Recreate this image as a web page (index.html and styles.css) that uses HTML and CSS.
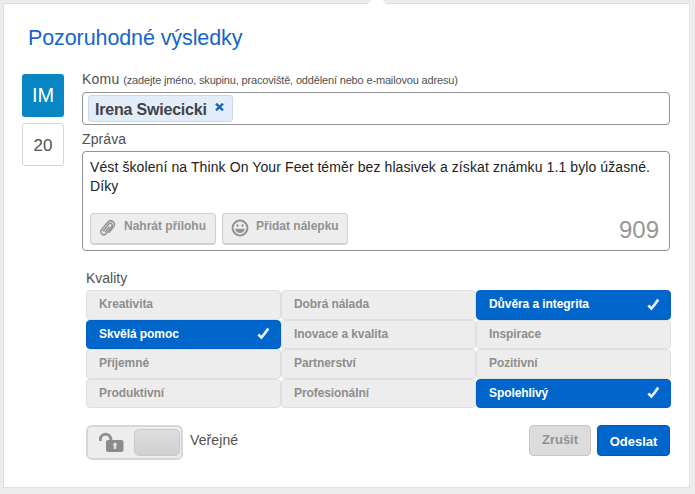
FILE: index.html
```html
<!DOCTYPE html>
<html lang="cs">

<head>
  <meta charset="UTF-8" />
  <meta name="viewport" content="width=device-width, initial-scale=1.0" />
  <title>Pozoruhodné výsledky</title>
  <link rel="stylesheet" href="styles.css">
</head>

<body>
  <div class="card">
    <span class="card-arrow"></span>
    <h1>Pozoruhodné výsledky</h1>

    <form class="columns" onsubmit="event.preventDefault();">
      <div class="side">
        <div class="avatar">IM</div>
        <div class="points">20</div>
      </div>

      <div class="main">
        <div class="label label-to"><span class="label-text">Komu</span> <small>(zadejte jméno, skupinu, pracoviště, oddělení nebo e-mailovou adresu)</small></div>
        <div class="recipients">
          <div class="tag">
            <span class="tag-name">Irena Swiecicki</span>
            <svg class="tag-remove" width="9" height="8" viewBox="0 0 9 8"><path d="M1 .7 8 7.3M8 .7 1 7.3" /></svg>
          </div>
        </div>

        <div class="label label-message">Zpráva</div>
        <div class="message">
          <p>Vést školení na Think On Your Feet téměr bez hlasivek a získat známku 1.1 bylo úžasné.<br>Díky</p>
          <div class="message-tools">
            <button type="button" class="tool-btn">
              <svg class="clip" width="18" height="18" viewBox="0 0 18 18"><path d="M4 12.2 9.7 5a2 2 0 0 1 3.1 2.6l-5.6 7a3 3 0 0 1-4.7-3.8l6.4-7.8a3.7 3.7 0 0 1 5.7 4.7l-4.9 6.2M10.3 7.7l-4.4 5.5" /></svg>
              <span>Nahrát přílohu</span>
            </button>
            <button type="button" class="tool-btn">
              <svg width="18" height="18" viewBox="0 0 18 18">
                <circle cx="9" cy="9" r="7.4" fill="none" stroke="#939393" stroke-width="2" />
                <ellipse cx="6.5" cy="6.5" rx="1" ry="1.6" fill="#939393" />
                <ellipse cx="11.5" cy="6.5" rx="1" ry="1.6" fill="#939393" />
                <path d="M4.2 9.7h9.6a4.8 4.2 0 0 1-9.6 0z" fill="#939393" />
              </svg>
              <span>Přidat nálepku</span>
            </button>
            <span class="counter">909</span>
          </div>
        </div>

        <div class="label label-qualities">Kvality</div>
        <div class="qualities">
          <div class="quality"><span>Kreativita</span></div>
          <div class="quality"><span>Dobrá nálada</span></div>
          <div class="quality selected"><span>Důvěra a integrita</span><svg width="13" height="13" viewBox="0 0 13 13"><path d="M1.3 7.5 4.5 10.5Q7.5 7 11.3 1.5" /></svg></div>
          <div class="quality selected"><span>Skvělá pomoc</span><svg width="13" height="13" viewBox="0 0 13 13"><path d="M1.3 7.5 4.5 10.5Q7.5 7 11.3 1.5" /></svg></div>
          <div class="quality"><span>Inovace a kvalita</span></div>
          <div class="quality"><span>Inspirace</span></div>
          <div class="quality"><span>Příjemné</span></div>
          <div class="quality"><span>Partnerství</span></div>
          <div class="quality"><span>Pozitivní</span></div>
          <div class="quality"><span>Produktivní</span></div>
          <div class="quality"><span>Profesionální</span></div>
          <div class="quality selected"><span>Spolehlivý</span><svg width="13" height="13" viewBox="0 0 13 13"><path d="M1.3 7.5 4.5 10.5Q7.5 7 11.3 1.5" /></svg></div>
        </div>

        <div class="footer">
          <div class="toggle">
            <svg width="25" height="20" viewBox="0 0 25 20">
              <path d="M1.3 9V7.5a5.3 5.3 0 0 1 10.6 0V9" fill="none" stroke="#929292" stroke-width="3" />
              <rect x="7" y="8" width="17.5" height="12" rx="2" fill="#8b8b8b" />
              <path d="M16 10.5a2 2 0 0 1 1.2 3.5v3h-2.4v-3a2 2 0 0 1 1.2-3.5z" fill="#e0e0e0" />
            </svg>
            <span class="toggle-knob"></span>
          </div>
          <span class="toggle-label">Veřejné</span>
          <button type="button" class="btn cancel-btn">Zrušit</button>
          <button type="submit" class="btn submit-btn">Odeslat</button>
        </div>
      </div>
    </form>
  </div>
</body>

</html>
```
FILE: styles.css
```css
* {
  box-sizing: border-box;
}

body {
  font-family: "Liberation Sans", Arial, sans-serif;
  margin: 0;
  padding: 3px 5px 6px 3px;
  height: 494px;
  background-color: #ececec;
  color: #505050;
  overflow: hidden;
}

button {
  font-family: inherit;
  cursor: pointer;
}

.card {
  position: relative;
  height: 485px;
  background-color: #fff;
  border: 1px solid #dfdfdf;
  box-shadow: 1px 0 0 #f3f3f3;
  padding: 18px 19px 0 18px;
}

/* tip of the popover pointing up */
.card-arrow {
  position: absolute;
  top: -6px;
  left: 365px;
  width: 16px;
  height: 16px;
  border-radius: 3px;
  background-color: #fff;
  transform: rotate(45deg);
}

h1 {
  margin: 0 0 0 6px;
  font-size: 21.5px;
  font-weight: normal;
  letter-spacing: -0.1px;
  line-height: 32px;
  color: #1467c8;
}

.columns {
  display: flex;
  gap: 18px;
  margin-top: 16px;
}

.side {
  display: flex;
  flex-direction: column;
  gap: 6px;
  width: 42px;
  padding-top: 4px;
}

.avatar,
.points {
  height: 43px;
  border-radius: 3px;
  text-align: center;
}

.avatar {
  background-color: #0786c4;
  color: #fff;
  font-size: 20px;
  line-height: 43px;
}

.points {
  border: 1px solid #d6d6d6;
  font-size: 17px;
  line-height: 43px;
}

.main {
  width: 588px;
}

.label {
  font-size: 14px;
  line-height: 18px;
  white-space: nowrap;
}

.label-to {
  height: 22px;
}

.label-text {
  letter-spacing: 0.2px;
}

.label small {
  font-size: 11px;
  letter-spacing: -0.16px;
}

.label-message {
  height: 26px;
  padding-top: 5px;
  letter-spacing: 0.1px;
}

.label-qualities {
  height: 39px;
  padding: 18px 0 0 4px;
}

.recipients {
  height: 33px;
  border: 1px solid #929292;
  border-radius: 4px;
  padding: 2px 5px;
}

.tag {
  display: flex;
  width: 145px;
  height: 27px;
  padding: 0 6px;
  border: 1px solid #ccd7e6;
  border-radius: 3px;
  background-color: #e3ecf9;
  color: #414448;
  font-size: 16px;
  font-weight: bold;
  letter-spacing: -0.2px;
  line-height: 28px;
  white-space: nowrap;
}

.tag-remove {
  margin: 7px 0 0 7px;
  fill: none;
  stroke: #1268ba;
  stroke-width: 2.4;
}

.message {
  display: flex;
  flex-direction: column;
  justify-content: space-between;
  height: 100px;
  border: 1px solid #929292;
  border-radius: 4px;
  padding: 6px 10px 5px 7px;
}

.message p {
  margin: 0;
  color: #222;
  font-size: 14px;
  letter-spacing: 0.1px;
  line-height: 19px;
  white-space: nowrap;
}

.message-tools {
  display: flex;
  gap: 6px;
  height: 32px;
}

.tool-btn {
  display: flex;
  gap: 7px;
  width: 126px;
  height: 32px;
  padding: 5px 0 0 8px;
  border: 1px solid #cfcfcf;
  border-bottom-width: 2px;
  border-radius: 4px;
  background-color: #ededed;
  color: #929292;
  font-size: 12px;
  font-weight: bold;
  line-height: 15px;
  white-space: nowrap;
}

.clip {
  fill: none;
  stroke: #939393;
  stroke-width: 1.5;
}

.tag .tag-remove {
  margin-left: 8px;
}

.counter {
  margin-left: auto;
  color: #979797;
  font-size: 24px;
  line-height: 34px;
}

.qualities {
  display: grid;
  grid-template-columns: repeat(3, 195px);
  grid-auto-rows: 29.5px;
  margin-left: 4px;
}

.quality {
  display: flex;
  align-items: center;
  justify-content: space-between;
  padding: 0 10px 1px 12px;
  border: 1px solid #dfdfdf;
  border-radius: 4px;
  background-color: #ededed;
  color: #8e8e8e;
  font-size: 12px;
  font-weight: bold;
  letter-spacing: -0.08px;
}

.quality.selected {
  border-color: #0060c3;
  background-color: #0066cc;
  color: #fff;
}

.quality svg {
  fill: none;
  stroke: #e9f3ff;
  stroke-width: 2.6;
}

.footer {
  display: flex;
  margin: 17px 0 0 4px;
}

.toggle {
  display: flex;
  justify-content: space-between;
  width: 97px;
  height: 35px;
  padding: 3px 1px 3px 11px;
  border: 2px solid #d6d6d6;
  border-radius: 6px;
  background-color: #ededed;
}

.toggle svg {
  margin-top: 2px;
}

.toggle-knob {
  width: 46px;
  height: 27px;
  margin-top: -1px;
  border: 1px solid #c9c9c9;
  border-radius: 5px;
  background: linear-gradient(#dedede, #d0d0d0);
}

.toggle-label {
  margin-left: 7px;
  font-size: 14px;
  letter-spacing: 0.1px;
  line-height: 31px;
}

.btn {
  height: 31px;
  padding: 0;
  border-radius: 4px;
  font-weight: bold;
}

.cancel-btn {
  width: 62px;
  margin-left: auto;
  padding-bottom: 2px;
  border: 1px solid #c7c7c7;
  background-color: #dcdcdc;
  color: #929292;
  font-size: 13px;
}

.submit-btn {
  width: 73px;
  margin-left: 6px;
  padding-top: 2px;
  border: 1px solid #0056b0;
  background-color: #0066cc;
  color: #fff;
  font-size: 13px;
}
```
